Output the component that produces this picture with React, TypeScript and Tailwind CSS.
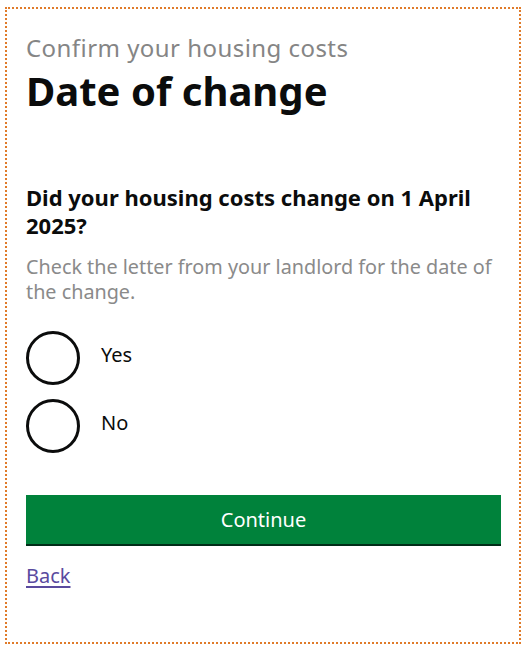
import { useState } from "react";

const options = ["Yes", "No"];

export default function App() {
  const [choice, setChoice] = useState<string | null>(null);

  return (
    <div className="w-[525px] h-[651px] bg-white pt-[7px] pl-[5px] font-['Noto_Sans',sans-serif]">
      <div className="w-[516px] h-[637px] border-2 border-dotted border-[#e07b2a] px-[19px] pt-[24px]">
        <p className="text-[24px] leading-[30px] tracking-[0.45px] text-[#858585]">Confirm your housing costs</p>
        <h1 className="mt-[6px] text-[40px] leading-[44px] font-bold text-[#0b0c0c]">Date of change</h1>

        <fieldset className="mt-[71px]">
          <legend className="text-[22px] leading-[27.5px] font-bold text-[#0b0c0c] pr-4">
            Did your housing costs change on 1 April 2025?
          </legend>
          <p className="mt-[15px] text-[19.8px] leading-[25px] text-[#8a8a8a]">
            Check the letter from your landlord for the date of the change.
          </p>

          <div className="mt-[27px] flex flex-col gap-[14px]">
            {options.map((opt) => (
              <label key={opt} className="flex items-center gap-[21px] cursor-pointer">
                <span className="w-[54px] h-[54px] rounded-full border-[3px] border-[#0b0c0c] flex items-center justify-center">
                  {choice === opt && <span className="w-[28px] h-[28px] rounded-full bg-[#0b0c0c]" />}
                </span>
                <input
                  type="radio"
                  name="changed"
                  className="sr-only"
                  checked={choice === opt}
                  onChange={() => setChoice(opt)}
                />
                <span className="text-[20px] leading-[25px] text-[#0b0c0c] -mt-[8px]">{opt}</span>
              </label>
            ))}
          </div>
        </fieldset>

        <button className="mt-[42px] w-[475px] h-[49px] bg-[#00823b] shadow-[0_2px_0_#002d18] text-white text-[20px] leading-[25px]">
          Continue
        </button>

        <div className="mt-[19px]">
          <a href="#" className="text-[20px] leading-[25px] text-[#5a4a9e] underline underline-offset-[3px]">
            Back
          </a>
        </div>
      </div>
    </div>
  );
}
